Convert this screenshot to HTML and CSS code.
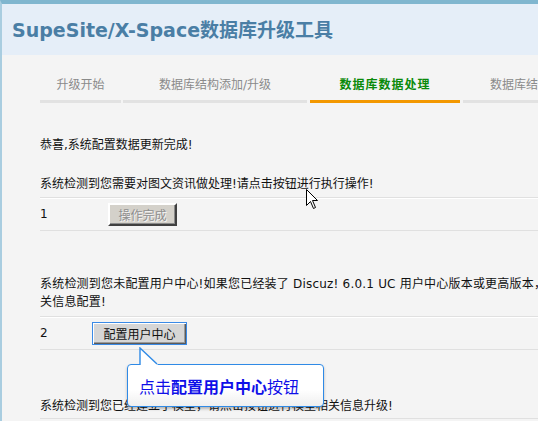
FILE: index.html
```html
<!DOCTYPE html>
<html lang="zh-CN">
<head>
<meta charset="utf-8">
<title>SupeSite/X-Space数据库升级工具</title>
<link rel="stylesheet" href="styles.css">
</head>
<body>
<div class="page">
  <header class="hd"><h1>SupeSite/X-Space数据库升级工具</h1></header>
  <div class="main">
    <ul class="tabs">
      <li class="t1">升级开始</li>
      <li class="t2">数据库结构添加/升级</li>
      <li class="t3 on">数据库数据处理</li>
      <li class="t4">数据库结构检查</li>
    </ul>
    <p class="msg m1">恭喜,系统配置数据更新完成!</p>
    <p class="msg m2">系统检测到您需要对图文资讯做处理!请点击按钮进行执行操作!</p>
    <div class="row r1">
      <span class="num n1">1</span>
      <button class="btn" disabled>操作完成</button>
    </div>
    <p class="msg m3">系统检测到您未配置用户中心!如果您已经装了 Discuz! 6.0.1 UC 用户中心版本或更高版本，<br>关信息配置!</p>
    <div class="row r2">
      <span class="num n2">2</span>
      <button class="btn focus">配置用户中心</button>
    </div>
    <p class="msg m4">系统检测到您已经建立了模型，请点击按钮进行模型相关信息升级!</p>
    <div class="row r3"></div>
  </div>
</div>

<div class="tip">
  <span class="tip-text">点击<b>配置用户中心</b>按钮</span>
</div>
<svg class="tip-arrow" width="22" height="20" viewBox="0 0 22 20">
  <polygon points="2,1 2,18 20,18" fill="#ffffff"/>
  <polyline points="2,18 2,1 19,17" fill="none" stroke="#2f8ae6" stroke-width="1.4"/>
</svg>

<svg class="cursor" width="13" height="21" viewBox="0 0 13 21">
  <polygon points="0.5,0.5 0.5,16.5 4.5,12.5 7.5,19.5 9.5,18.5 6.5,11.5 11.5,11.5" fill="#ffffff" stroke="#000000" stroke-width="1" stroke-linejoin="miter"/>
</svg>
</body>
</html>
```
FILE: styles.css
```css
html, body {
  margin: 0;
  overflow: hidden;
}
body {
  width: 538px;
  height: 421px;
  position: relative;
  background: #f4f4f4;
  font: 12px "DejaVu Sans", "Noto Sans CJK SC", sans-serif;
  color: #111;
}
.page {
  width: 700px;
  min-height: 417px;
  border-top: 4px solid #80b6cf;
  border-left: 2px solid #a9cde0;
}
.hd {
  height: 36px;
  padding: 15px 0 0 10px;
  background: #e5eef8;
}
.hd h1 {
  margin: 0;
  font: bold 19px/22px "DejaVu Sans", "Noto Sans CJK SC", sans-serif;
  color: #4a7ea5;
  white-space: nowrap;
}
.main {
  padding-left: 38px;
}
.tabs {
  display: flex;
  margin: 22px 0 0;
  padding: 0;
  list-style: none;
  white-space: nowrap;
}
.tabs li {
  flex: none;
  line-height: 16px;
  padding-bottom: 7px;
  border-bottom: 3px solid #e2e2e2;
  text-align: center;
  color: #8a8a8a;
}
.tabs .t1 { width: 81px; margin-right: 2px; }
.tabs .t2 { width: 184px; margin-right: 3px; }
.tabs .t3 { width: 150px; margin-right: 3px; }
.tabs .t4 { width: 138px; }
.tabs .on {
  border-bottom-color: #f39800;
  color: #0a8a0a;
  font-weight: bold;
  letter-spacing: 1px;
}
.msg {
  margin: 0;
  line-height: 18px;
  white-space: nowrap;
}
.m1 { margin-top: 33px; }
.m2 { margin-top: 21px; margin-bottom: 4px; }
.m3 { margin-top: 44px; margin-bottom: 5px; letter-spacing: 0.2px; }
.m4 { margin-top: 47px; margin-bottom: 3px; }
.row {
  display: flex;
  align-items: center;
  height: 32px;
  border-top: 1px solid #e0e0e0;
  border-bottom: 1px solid #e0e0e0;
  box-shadow: inset 0 1px 0 #ffffff;
}
.r3 { height: 0; border-bottom: 0; }
.num { flex: none; }
.n1 { width: 68px; }
.n2 { width: 52px; }
.btn {
  height: 23px;
  padding: 0 8px;
  font: 12px "DejaVu Sans", "Noto Sans CJK SC", sans-serif;
  background: #d4d1ca;
  color: #111;
  border: 2px solid;
  border-color: #ffffff #404040 #404040 #ffffff;
  box-shadow: inset -1px -1px 0 #8a8a8a;
}
.btn[disabled] {
  color: #8f8f8f;
  text-shadow: 1px 1px 0 #f4f4f4;
  width: 69px;
}
.btn.focus {
  width: 95px;
  background: #d6d6d6;
  border: 1px solid #3a8ae6;
  box-shadow: inset 1px 1px 0 #ffffff, inset -1px -1px 0 #5a5a5a, inset -2px -2px 0 #9a9a9a;
}
.tip {
  position: absolute;
  left: 127px;
  top: 364px;
  width: 184px;
  height: 41px;
  border: 1px solid #2f8ae6;
  border-radius: 4px;
  background: linear-gradient(#ffffff, #ffffff 60%, #efefef);
  box-shadow: 0 2px 3px rgba(0, 0, 0, 0.25);
  display: flex;
  align-items: center;
  padding-left: 11px;
  box-sizing: content-box;
}
.tip-text {
  font: 16px "Noto Sans CJK SC", sans-serif;
  color: #0f0fe8;
  white-space: nowrap;
}
.tip-text b { font-weight: bold; }
.tip-arrow {
  position: absolute;
  left: 138px;
  top: 347px;
}
.cursor {
  position: absolute;
  left: 306px;
  top: 189px;
}
```
